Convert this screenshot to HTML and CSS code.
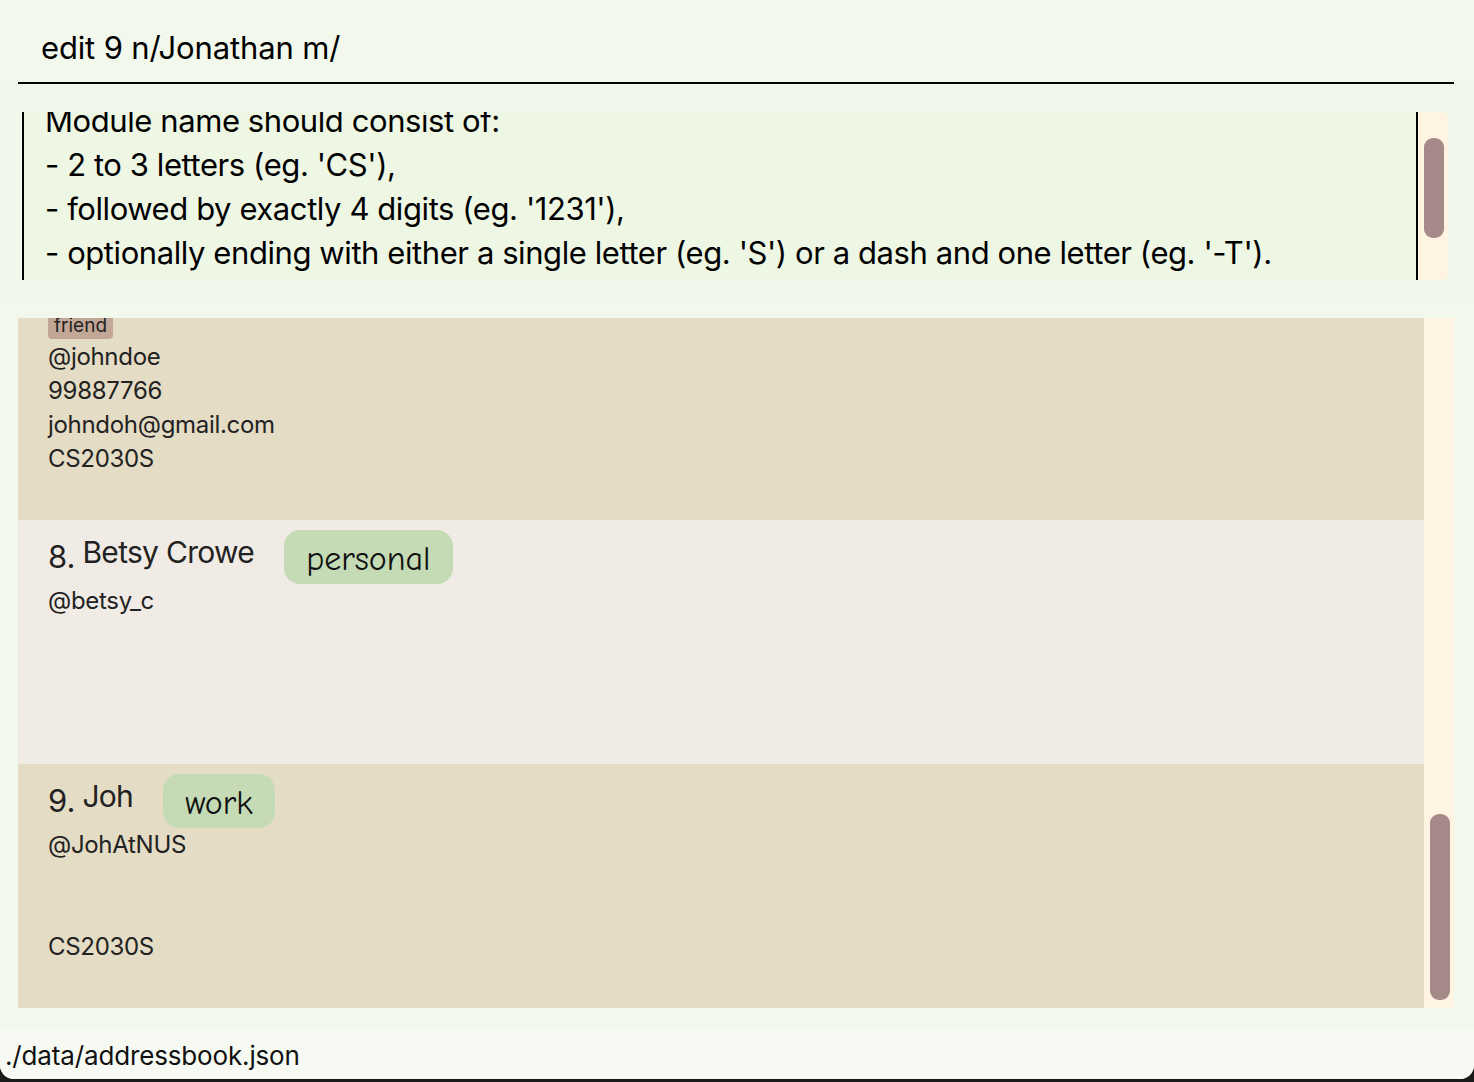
FILE: index.html
```html
<!DOCTYPE html>
<html lang="en">
<head>
<meta charset="utf-8">
<title>Address Book</title>
<link rel="stylesheet" href="styles.css">
</head>
<body>
<div class="app">
  <div class="command">
    <div class="command-input">edit 9 n/Jonathan m/</div>
  </div>

  <div class="result-panel">
    <div class="result-box">
      <div class="result-text">
        <div class="result-lines">
          <div>Module name should consist of:</div>
          <div>- 2 to 3 letters (eg. 'CS'),</div>
          <div>- followed by exactly 4 digits (eg. '1231'),</div>
          <div>- optionally ending with either a single letter (eg. 'S') or a dash and one letter (eg. '-T').</div>
        </div>
      </div>
      <div class="result-scroll"><div class="result-thumb"></div></div>
    </div>
  </div>

  <div class="list-panel">
    <div class="list-view">
      <div class="list-inner">
        <div class="card card-dark">
          <div class="name-row name-row-end">
            <span class="role-tag">friend</span>
          </div>
          <div class="line">@johndoe</div>
          <div class="line">99887766</div>
          <div class="line">johndoh@gmail.com</div>
          <div class="line">CS2030S</div>
        </div>
        <div class="card card-light">
          <div class="name-row">
            <span class="idx">8.</span>
            <span class="name">Betsy Crowe</span>
            <span class="tag">personal</span>
          </div>
          <div class="line">@betsy_c</div>
        </div>
        <div class="card card-dark">
          <div class="name-row">
            <span class="idx">9.</span>
            <span class="name">Joh</span>
            <span class="tag">work</span>
          </div>
          <div class="line">@JohAtNUS</div>
          <div class="line"></div>
          <div class="line"></div>
          <div class="line">CS2030S</div>
        </div>
      </div>
    </div>
    <div class="list-scroll"><div class="list-thumb"></div></div>
  </div>

  <div class="status">./data/addressbook.json</div>
</div>
</body>
</html>
```

FILE: styles.css
```css
* { box-sizing: border-box; }
html, body {
  margin: 0;
  padding: 0;
  background: #1a1a1a;
}
body {
  font-family: Inter, "Liberation Sans", sans-serif;
  color: #111;
}
.app {
  width: 1474px;
  height: 1079px;
  background: #f3f8ed;
  border-bottom-left-radius: 14px;
  border-bottom-right-radius: 14px;
  overflow: hidden;
  display: flex;
  flex-direction: column;
}

/* command box */
.command {
  height: 84px;
  padding: 0 20px 0 18px;
}
.command-input {
  height: 84px;
  border-bottom: 2px solid #000;
  padding: 28px 0 0 23px;
  font-size: 31px;
  line-height: 40px;
  letter-spacing: -0.15px;
  color: #000;
}

/* result display */
.result-panel {
  height: 216px;
  padding: 28px 26px 0 22px;
  background: #f1f7ea;
}
.result-box {
  display: flex;
  height: 168px;
}
.result-text {
  flex: 1;
  border-left: 2px solid #000;
  border-right: 2px solid #000;
  background: #eef6e4;
  overflow: hidden;
  padding-left: 21px;
}
.result-lines {
  margin-top: -13px;
  font-size: 31px;
  line-height: 44px;
  letter-spacing: -0.42px;
  color: #000;
  white-space: nowrap;
}
.result-scroll {
  width: 30px;
  background: #fff3e1;
  border-top-right-radius: 6px;
  border-bottom-right-radius: 6px;
  padding: 26px 4px 0 6px;
}
.result-thumb {
  height: 100px;
  background: #a68a8a;
  border-radius: 9px;
}

/* person list */
.list-panel {
  margin: 18px 20px 0 18px;
  height: 690px;
  display: flex;
}
.list-view {
  flex: 1;
  overflow: hidden;
}
.list-inner {
  margin-top: -42px;
}
.card {
  height: 244px;
  padding: 10px 0 0 30px;
}
.card-dark { background: #e4dcc5; }
.card-light { background: #f0ebe5; }
.name-row {
  height: 54px;
  display: flex;
  align-items: flex-start;
}
.name-row-end {
  align-items: flex-end;
  padding-bottom: 1px;
}
.role-tag {
  background: #c3a796;
  border-radius: 4px;
  font-size: 19px;
  line-height: 27px;
  padding: 0 6px;
  color: #222;
}
.idx {
  font-size: 31px;
  line-height: 44px;
  padding-top: 5px;
  margin-right: 7px;
  color: #222;
}
.name {
  font-size: 30px;
  line-height: 44px;
  letter-spacing: -0.7px;
  color: #222;
}
.tag {
  margin-left: 30px;
  height: 54px;
  line-height: 58px;
  padding: 0 22px;
  background: #c4dbb5;
  border-radius: 16px;
  font-family: "Comic Sans MS", "Comic Neue", cursive;
  font-size: 34px;
  color: #111;
}
.line {
  height: 34px;
  line-height: 34px;
  font-size: 24px;
  color: #222;
  letter-spacing: -0.3px;
}
.list-scroll {
  width: 30px;
  background: #fff3e1;
  padding: 496px 4px 0 6px;
}
.list-thumb {
  height: 186px;
  background: #a68a8a;
  border-radius: 9px;
}

/* status bar */
.status {
  margin-top: 22px;
  flex: 1;
  background: #f7faf2;
  padding: 8px 0 0 5px;
  font-size: 26px;
  line-height: 36px;
  letter-spacing: -0.15px;
  color: #111;
}
```
